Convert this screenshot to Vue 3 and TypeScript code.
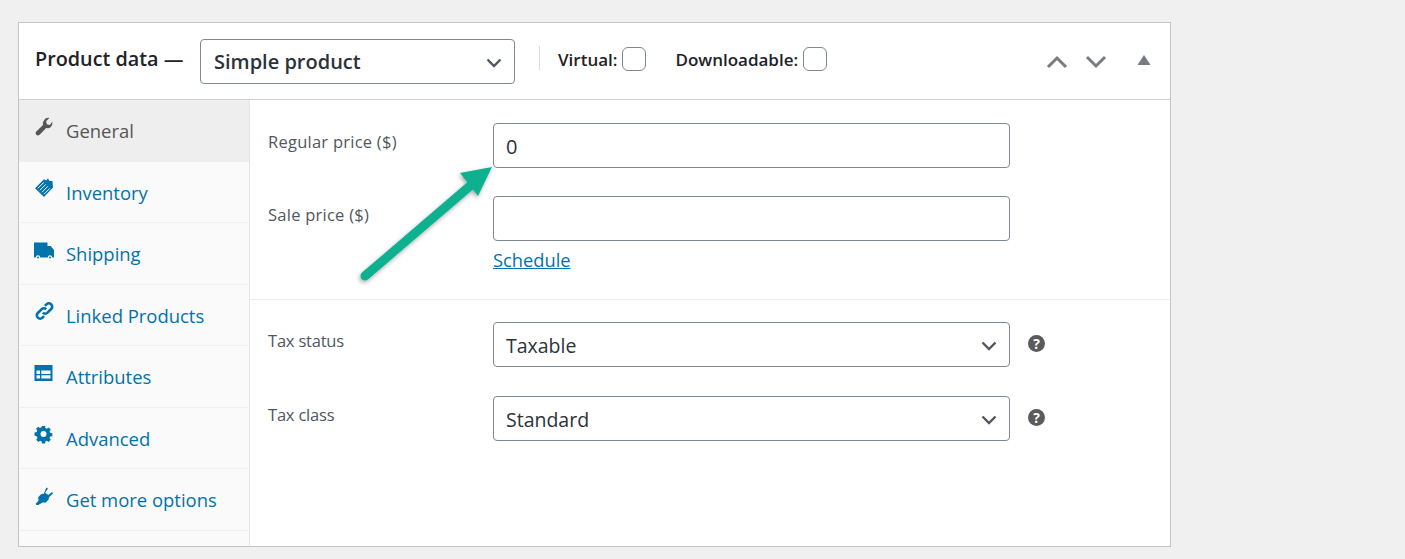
<script setup lang="ts">
interface Tab { id: string; label: string }
const tabs: Tab[] = [
  { id: 'general', label: 'General' },
  { id: 'inventory', label: 'Inventory' },
  { id: 'shipping', label: 'Shipping' },
  { id: 'linked', label: 'Linked Products' },
  { id: 'attributes', label: 'Attributes' },
  { id: 'advanced', label: 'Advanced' },
  { id: 'more', label: 'Get more options' },
]
</script>

<template>
  <div class="page">
    <section class="card">
      <header class="head">
        <h2 class="title">Product data —</h2>
        <div class="select-wrap type-wrap">
          <select class="field type-select"><option>Simple product</option></select>
          <svg class="chev" viewBox="0 0 16 10"><path d="M1.500 1.500 8 8l6.500-6.500" /></svg>
        </div>
        <span class="sep"></span>
        <label class="check first">Virtual:<input type="checkbox" /></label>
        <label class="check">Downloadable:<input type="checkbox" /></label>
        <div class="controls">
          <svg class="ctl" viewBox="0 0 22 14"><path d="M2 12 11 3l9 9" /></svg>
          <svg class="ctl" viewBox="0 0 22 14"><path d="M2 2l9 9 9-9" /></svg>
          <svg class="tri" viewBox="0 0 14 10"><path d="M7 0l6.500 10H.5z" /></svg>
        </div>
      </header>

      <div class="body">
        <nav class="tabs">
          <a v-for="(t, i) in tabs" :key="t.id" class="tab" :class="{ active: i === 0 }">
            <svg class="ico" viewBox="0 0 20 20">
              <path v-if="t.id === 'general'" d="M18.200 4.800c.5 1.900 0 3.800-1.400 5.100-1.300 1.200-3 1.600-4.600 1.200l-6.600 6.700c-.9.900-2.400.9-3.300 0-.9-.9-.9-2.400 0-3.300l6.700-6.600c-.4-1.600 0-3.300 1.200-4.600C11.500 1 13.400.5 15.300 1l-3.200 3.200.7 3.100 3.100.7 2.300-3.200z" />
              <g v-else-if="t.id === 'inventory'">
                <path d="M1 10.300 10 1.300l2 1.300L14 .6l1.500 2.400h3l.5 6.500-9 9.500z" />
                <path class="hatch" d="M3.900 10.300 9.800 4.400M5.900 12.300 11.800 6.400M7.900 14.300 13.800 8.400M9.900 16.300 15.800 10.400" />
              </g>
              <g v-else-if="t.id === 'shipping'">
                <path d="M0 2.500h13.500V6h3.200l3.300 4v7.500H0z" />
                <circle class="wheel" cx="4" cy="17.500" r="2.200" />
                <circle class="wheel" cx="16" cy="17.500" r="2.200" />
                <circle cx="4" cy="17.500" r="1" />
                <circle cx="16" cy="17.500" r="1" />
              </g>
              <g v-else-if="t.id === 'linked'" class="link-g" transform="translate(.5 0)">
                <path d="M8.300 11.700a3.300 3.300 0 0 0 4.700 0l3.700-3.700a3.300 3.300 0 0 0-4.700-4.700l-1.600 1.600" />
                <path d="M11.700 8.300a3.300 3.300 0 0 0-4.700 0l-3.700 3.700a3.300 3.300 0 0 0 4.700 4.700l1.600-1.600" />
              </g>
              <path v-else-if="t.id === 'attributes'" fill-rule="evenodd" d="M.5 2h18v16H.5zm2 5.500v3.500h3.500V7.500zm0 4.800V15.500h3.500v-3.200zM7.300 7.500v3.500h9.200V7.500zm0 4.800v3.200h9.200v-3.200z" />
              <path v-else-if="t.id === 'advanced'" transform="translate(.5 1) scale(.9)" fill-rule="evenodd" d="M8.300 1h3.400l.4 2.400 1.600.7 2-1.400 2.400 2.400-1.400 2 .7 1.600 2.400.4v3.400l-2.400.4-.7 1.600 1.400 2-2.400 2.400-2-1.400-1.600.7-.4 2.400H8.300l-.4-2.400-1.600-.7-2 1.400-2.400-2.400 1.400-2-.7-1.600L0 11.700V8.300l2.400-.4.700-1.600-1.400-2 2.400-2.400 2 1.400 1.600-.7zM10 6.700a3.300 3.300 0 1 0 0 6.600 3.300 3.300 0 0 0 0-6.600z" />
              <path v-else d="M12.300 1.500l1.700 1-3 4.200 3.300 2.300 3.700-3 1 1.600-4 3.600-.4 2.400-2.800 2.800-3.300.2L4.200 19H2.300l-.6-1.300 2.800-3 -.3-3.400 2.800-3 2.800-.6z" />
            </svg>
            <span>{{ t.label }}</span>
          </a>
        </nav>

        <div class="panel">
          <div class="group pricing">
            <div class="row">
              <label class="price-label">Regular price ($)</label>
              <input class="field text" value="0" />
            </div>
            <div class="row sale">
              <label class="price-label">Sale price ($)</label>
              <div class="stack">
                <input class="field text" />
                <a class="schedule">Schedule</a>
              </div>
            </div>
          </div>
          <div class="group tax">
            <div class="row">
              <label>Tax status</label>
              <div class="select-wrap">
                <select class="field tax-select"><option>Taxable</option></select>
                <svg class="chev" viewBox="0 0 16 10"><path d="M1.500 1.500 8 8l6.500-6.500" /></svg>
              </div>
              <span class="help">?</span>
            </div>
            <div class="row taxclass">
              <label>Tax class</label>
              <div class="select-wrap">
                <select class="field tax-select"><option>Standard</option></select>
                <svg class="chev" viewBox="0 0 16 10"><path d="M1.500 1.500 8 8l6.500-6.500" /></svg>
              </div>
              <span class="help">?</span>
            </div>
          </div>
        </div>
      </div>

      <svg class="arrow" viewBox="0 0 160 130" width="160" height="130">
        <defs>
          <filter id="sh" x="-20%" y="-20%" width="140%" height="140%">
            <feDropShadow dx="-1" dy="2" stdDeviation="2" flood-color="#000" flood-opacity="0.35" />
          </filter>
        </defs>
        <g filter="url(#sh)">
          <line x1="29" y1="116" x2="134" y2="26" stroke="#09b08f" stroke-width="9" stroke-linecap="round" />
          <path d="M156 7 124 13 142 36z" fill="#09b08f" />
        </g>
      </svg>
    </section>
  </div>
</template>

<style scoped>
.page {
  height: 559px;
  box-sizing: border-box;
  padding: 22px 0 0 18px;
  background: #f0f0f1;
  font-family: "Open Sans", "Noto Sans", sans-serif;
  overflow: hidden;
}
.card {
  position: relative;
  width: 1153px;
  height: 525px;
  box-sizing: border-box;
  background: #fff;
  border: 1px solid #c3c4c7;
  display: flex;
  flex-direction: column;
}
.head {
  height: 77px;
  flex: none;
  box-sizing: border-box;
  border-bottom: 1px solid #d0d1d4;
  display: flex;
  align-items: center;
  padding-left: 16px;
}
.title {
  margin: 0 15px 6px 0;
  font-size: 19.800px;
  font-weight: 600;
  color: #1d2327;
  white-space: nowrap;
  width: 150px;
}
.select-wrap {
  position: relative;
  width: 517px;
  height: 45px;
  flex: none;
}
.type-wrap {
  width: 315px;
  margin: 0 24px 0 0;
}
.field {
  width: 100%;
  height: 45px;
  box-sizing: border-box;
  display: block;
  border: 1px solid #7e8993;
  border-radius: 4px;
  background: #fff;
  color: #2c3338;
  font: 400 20px "Open Sans", "Noto Sans", sans-serif;
  padding: 0 12px;
  appearance: none;
  outline: none;
}
.field.text {
  padding-top: 2px;
}
.tax-select {
  font-size: 19.500px;
  padding-top: 2.500px;
}
.type-select {
  font-weight: 600;
  padding-left: 13px;
}
.chev {
  position: absolute;
  right: 13px;
  top: 19px;
  width: 16px;
  height: 10px;
  fill: none;
  stroke: #50575e;
  stroke-width: 2.400;
  pointer-events: none;
}
.sep {
  width: 1px;
  height: 24px;
  background: #dcdcde;
  margin-bottom: 6px;
}
.check {
  display: flex;
  align-items: center;
  gap: 5px;
  font-size: 17px;
  font-weight: 600;
  color: #1d2327;
  margin: 0 0 4px 29px;
}
.check.first {
  margin-left: 18px;
}
.check input {
  appearance: none;
  width: 24px;
  height: 24px;
  margin: 0;
  background: #fff;
  border: 1px solid #7e8993;
  border-radius: 6px;
  box-sizing: border-box;
}
.controls {
  margin-left: auto;
  display: flex;
  align-items: center;
  padding-right: 19px;
}
.ctl {
  width: 22px;
  height: 14px;
  margin: 2px 17px 0 0;
  fill: none;
  stroke: #787c82;
  stroke-width: 3;
}
.tri {
  width: 14px;
  height: 10px;
  margin: 0 0 3px 13px;
  fill: #787c82;
}
.body {
  flex: 1;
  display: flex;
  min-height: 0;
}
.tabs {
  width: 231px;
  flex: none;
  box-sizing: border-box;
  background: #fafafa;
  border-right: 1px solid #e5e5e5;
}
.tab {
  height: 61.500px;
  box-sizing: border-box;
  border-bottom: 1px solid #f0f0f0;
  display: flex;
  align-items: center;
  padding-left: 15px;
  gap: 12px;
  color: #0073aa;
  font-size: 18.450px;
}
.tab.active {
  background: #eee;
  color: #555;
  border-bottom-color: #eee;
}
.tab span {
  padding-top: 1px;
}
.ico {
  width: 20px;
  height: 20px;
  flex: none;
  margin-top: -7px;
  fill: currentColor;
}
.hatch {
  fill: none;
  stroke: #fafafa;
  stroke-width: 1;
}
.wheel {
  fill: #fafafa;
}
.link-g {
  fill: none;
  stroke: currentColor;
  stroke-width: 2.600;
}
.panel {
  flex: 1;
  min-width: 0;
}
.group {
  box-sizing: border-box;
}
.pricing {
  height: 200px;
  padding-top: 23px;
  border-bottom: 1px solid #eee;
}
.tax {
  padding-top: 22px;
}
.row {
  display: flex;
  align-items: flex-start;
  padding-left: 18px;
}
.row.sale {
  margin-top: 28px;
}
.row.taxclass {
  margin-top: 29px;
}
.row label {
  width: 225px;
  flex: none;
  font-size: 16.500px;
  line-height: 22px;
  padding-top: 8px;
  color: #50575e;
  letter-spacing: -0.2px;
}
.row label.price-label {
  letter-spacing: 0.25px;
}
.row > .field,
.stack {
  width: 517px;
  flex: none;
}
.schedule {
  display: block;
  margin-top: 7px;
  font-size: 18.300px;
  line-height: 24px;
  color: #0073aa;
  text-decoration: underline;
}
.help {
  width: 17px;
  height: 17px;
  margin: 13px 0 0 18px;
  border-radius: 50%;
  background: #5b5b5b;
  color: #fff;
  font-size: 14px;
  font-weight: 700;
  line-height: 17px;
  text-align: center;
}
.arrow {
  position: absolute;
  left: 317px;
  top: 137px;
  pointer-events: none;
}
</style>

<style>
body { margin: 0; background: #f0f0f1; }
</style>
